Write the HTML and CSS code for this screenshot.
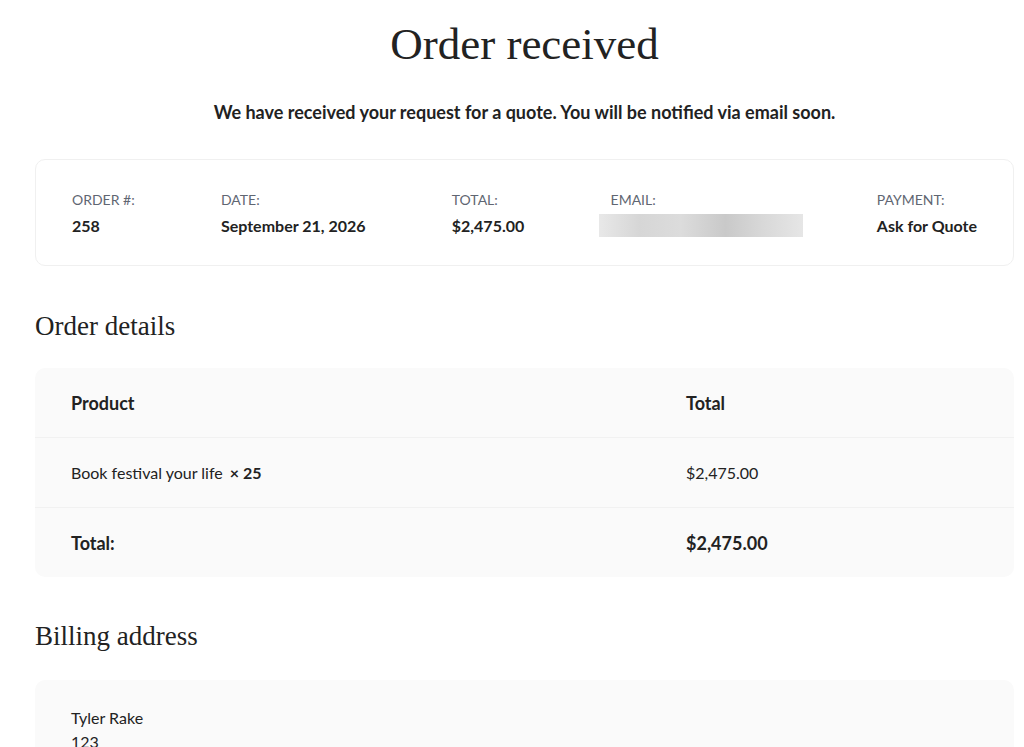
FILE: index.html
```html
<!DOCTYPE html>
<html>

<head>
  <meta name="viewport" content="width=device-width, initial-scale=1.0">
  <title>Order received</title>
  <link rel="stylesheet" href="styles.css">
</head>

<body>
  <div class="page">
    <h1 class="page-title">Order received</h1>
    <p class="notice">We have received your request for a quote. You will be notified via email soon.</p>

    <!-- Order overview -->
    <ul class="overview">
      <li class="overview-item">
        <span class="overview-label">Order #:</span>
        <strong>258</strong>
      </li>
      <li class="overview-item">
        <span class="overview-label">Date:</span>
        <strong>September 21, 2026</strong>
      </li>
      <li class="overview-item">
        <span class="overview-label">Total:</span>
        <strong>$2,475.00</strong>
      </li>
      <li class="overview-item overview-email">
        <span class="overview-label">Email:</span>
        <span class="blurred"></span>
      </li>
      <li class="overview-item">
        <span class="overview-label">Payment:</span>
        <strong>Ask for Quote</strong>
      </li>
    </ul>

    <!-- Order details -->
    <h2 class="section-title">Order details</h2>
    <table class="order-table">
      <thead>
        <tr>
          <th class="col-product">Product</th>
          <th class="col-total">Total</th>
        </tr>
      </thead>
      <tbody>
        <tr>
          <td>Book festival your life <strong class="qty">&times;&nbsp;25</strong></td>
          <td>$2,475.00</td>
        </tr>
      </tbody>
      <tfoot>
        <tr>
          <th>Total:</th>
          <td><strong>$2,475.00</strong></td>
        </tr>
      </tfoot>
    </table>

    <!-- Billing -->
    <h2 class="section-title section-billing">Billing address</h2>
    <address class="address-box">
      Tyler Rake<br>
      123<br>
      Street 1
    </address>
  </div>
</body>

</html>
```

FILE: styles.css
```css
body {
  margin: 0;
  padding: 0;
  font-family: Lato, "Noto Sans", sans-serif;
  color: #222;
  background-color: #fff;
}

.page {
  padding: 0 10px 40px 35px;
}

.page-title {
  font-family: "Liberation Serif", serif;
  font-weight: 400;
  font-size: 45px;
  line-height: 50px;
  text-align: center;
  margin: 19px 0 0;
}

.notice {
  text-align: center;
  font-weight: 700;
  font-size: 18px;
  margin: 32px 0 0;
}

/* Overview */
.overview {
  list-style: none;
  display: flex;
  justify-content: space-between;
  margin: 36px 0 0;
  padding: 31px 36px 28px;
  border: 1px solid #f0f0f0;
  border-radius: 10px;
}

.overview-item {
  display: flex;
  flex-direction: column;
  gap: 8px;
  font-size: 16px;
}

.overview-label {
  text-transform: uppercase;
  font-size: 14px;
  color: #5f6672;
}

.overview-email {
  width: 180px;
}

.blurred {
  display: block;
  width: 204px;
  height: 23px;
  margin-left: -12px;
  margin-top: -2px;
  background: linear-gradient(90deg, #e8e8e8 0%, #d6d6d6 20%, #dcdcdc 40%, #c9c9c9 62%, #d8d8d8 80%, #e6e6e6 100%);
}

/* Sections */
.section-title {
  font-family: "Liberation Serif", serif;
  font-weight: 400;
  font-size: 27px;
  margin: 45px 0 0;
}

.section-billing {
  margin-top: 44px;
}

.order-table {
  width: 100%;
  table-layout: fixed;
  margin-top: 26px;
  border-collapse: separate;
  border-spacing: 0;
  background-color: #fafafa;
  border-radius: 10px;
  font-size: 16px;
}

.order-table th,
.order-table td {
  text-align: left;
  height: 69px;
  padding: 0 36px;
}

.order-table th {
  font-size: 18px;
}

.order-table tbody td,
.order-table tfoot th,
.order-table tfoot td {
  border-top: 1px solid #f1f1f1;
}

.order-table tfoot td {
  font-size: 18px;
}

.col-product {
  width: 543px;
}

.qty {
  margin-left: 3px;
}

.address-box {
  font-style: normal;
  background-color: #fafafa;
  border-radius: 10px;
  margin-top: 28px;
  padding: 26px 36px;
  font-size: 16px;
  line-height: 24px;
}
```
